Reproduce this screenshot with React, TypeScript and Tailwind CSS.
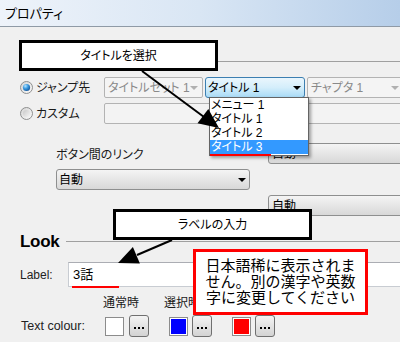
import React from "react";

function Tri({ color = "#000" }: { color?: string }) {
  return (
    <svg width="8" height="4" viewBox="0 0 8 4" className="shrink-0">
      <path d="M0 0H8L4 4Z" fill={color} />
    </svg>
  );
}

function Radio({ checked }: { checked?: boolean }) {
  const k = checked ? "on" : "off";
  return (
    <svg width="13" height="13" viewBox="0 0 13 13" className="shrink-0">
      <defs>
        <linearGradient id={`ring-${k}`} x1="0" y1="0" x2="1" y2="1">
          <stop offset="0" stopColor="#d4d4d4" />
          <stop offset="1" stopColor="#fbfbfb" />
        </linearGradient>
        <radialGradient id={`dot-${k}`} cx="0.35" cy="0.3" r="0.8">
          <stop offset="0" stopColor="#b6e4ff" />
          <stop offset="0.45" stopColor="#3a9ae0" />
          <stop offset="1" stopColor="#0d4a8f" />
        </radialGradient>
        <linearGradient id={`in-${k}`} x1="0" y1="0" x2="1" y2="1">
          <stop offset="0" stopColor="#c8c8c8" />
          <stop offset="1" stopColor="#f6f6f6" />
        </linearGradient>
      </defs>
      <circle cx="6.5" cy="6.5" r="6" fill={`url(#ring-${k})`} stroke="#8e8f8f" strokeWidth="1" />
      {checked ? (
        <circle cx="6.5" cy="6.5" r="3.6" fill={`url(#dot-${k})`} />
      ) : (
        <circle cx="6.5" cy="6.5" r="3.6" fill={`url(#in-${k})`} />
      )}
    </svg>
  );
}

function Swatch({ color }: { color: string }) {
  return (
    <div className="w-[19px] h-[19px] border border-[#8c8c8c] bg-white p-px shrink-0">
      <div className="w-full h-full" style={{ backgroundColor: color }} />
    </div>
  );
}

function DotsButton({ className = "" }: { className?: string }) {
  return (
    <div
      className={`w-[20px] h-[22px] shrink-0 rounded-[3px] border border-[#707070] bg-linear-to-b from-[#f4f4f4] to-[#d3d3d3] flex items-end justify-center gap-[2px] pb-[7px] ${className}`}
    >
      <div className="w-[2px] h-[2px] bg-black" />
      <div className="w-[2px] h-[2px] bg-black" />
      <div className="w-[2px] h-[2px] bg-black" />
    </div>
  );
}

export default function App() {
  return (
    <div className="relative w-[400px] h-[342px] overflow-hidden flex flex-col bg-[#f0f0f0] text-[#1a1a1a] font-['Liberation_Sans','Noto_Sans_CJK_JP',sans-serif]">
      {/* title bar */}
      <div className="h-[26px] shrink-0 flex items-center pl-[5px] bg-linear-to-r from-[#eef3fa] via-[#d9e6f4] to-[#b6cee9]">
        <span className="text-[13px] leading-none text-black [font-feature-settings:'palt']">
          プロパティ
        </span>
      </div>

      <div className="flex flex-1">
        <div className="w-[3px] bg-[#b8cce2]" />
        <div className="w-px bg-[#7c8a99]" />
        <div className="flex-1 flex flex-col border-t border-[#8f9aa6] text-[12px] [font-feature-settings:'palt']">
          {/* separator */}
          <div className="mt-[34px] h-px bg-[#a0a0a0] ml-[100px]" />

          {/* row 1 */}
          <div className="mt-[15px] h-[21px] flex items-center">
            <div className="ml-[20px] w-[84px] flex items-center gap-[3px]">
              <Radio checked />
              <span>ジャンプ先</span>
            </div>
            <div className="w-[99px] h-full flex items-center justify-between pl-[3px] pr-[4px] border border-[#b3b3b3] rounded-[2px] bg-[#f4f4f4] text-[#8a8a8a]">
              <span>タイトルセット 1</span>
              <Tri color="#b0b0b0" />
            </div>
            <div className="ml-[2px] w-[100px] h-full flex items-center justify-between pl-[2px] pr-[3px] border border-[#3c7fb1] rounded-[3px] bg-linear-to-b from-[#eaf6fd] via-[#d4eefb] to-[#a9dbf6] text-black">
              <span>タイトル 1</span>
              <Tri />
            </div>
            <div className="ml-[2px] w-[96px] shrink-0 h-full flex items-center justify-between pl-[3px] pr-[3px] border border-[#b3b3b3] rounded-[2px] bg-[#f4f4f4] text-[#8a8a8a]">
              <span>チャプタ 1</span>
              <Tri color="#b0b0b0" />
            </div>
          </div>

          {/* row 2 */}
          <div className="mt-[5px] h-[21px] flex items-center">
            <div className="ml-[20px] w-[84px] flex items-center gap-[3px]">
              <Radio />
              <span>カスタム</span>
            </div>
            <div className="w-[300px] shrink-0 h-full border border-[#b3b3b3] rounded-[2px] bg-[#f3f3f3]" />
          </div>

          {/* link section */}
          <div className="mt-[19px] flex items-start">
            <div className="ml-[56px] w-[194px] flex flex-col">
              <div className="mt-[5px] h-[14px] leading-[14px]">ボタン間のリンク</div>
              <div className="mt-[7px] h-[21px] flex items-center justify-between pl-[2px] pr-[3px] border border-[#8e8f8f] rounded-[3px] bg-linear-to-b from-[#f4f4f4] to-[#d8d8d8] text-black">
                <span>自動</span>
                <Tri />
              </div>
            </div>
            <div className="ml-[18px] w-[140px] shrink-0 flex flex-col">
              <div className="h-[21px] flex items-center pl-[3px] border border-[#8e8f8f] rounded-[3px] bg-linear-to-b from-[#f4f4f4] to-[#d8d8d8] text-black">
                <span>自動</span>
              </div>
              <div className="mt-[31px] h-[21px] flex items-center pl-[3px] border border-[#8e8f8f] rounded-[3px] bg-linear-to-b from-[#f4f4f4] to-[#d8d8d8] text-black">
                <span>自動</span>
              </div>
            </div>
          </div>

          {/* Look heading */}
          <div className="mt-[17px] h-[16px] flex items-center">
            <span className="ml-[20px] text-[17px] font-bold leading-none tracking-[-0.3px] text-black">
              Look
            </span>
            <div className="flex-1 h-px bg-[#a0a0a0] ml-[7px]" />
          </div>

          {/* Label row */}
          <div className="mt-[13px] h-[25px] flex items-center">
            <span className="ml-[20px] w-[48px] text-[12px] text-[#222]">Label:</span>
            <div className="flex-1 h-full bg-white border border-[#c8ccd2] border-t-[#abadb3] flex items-center pl-[4px] text-[13px] text-black">
              3話
            </div>
          </div>

          {/* column headers */}
          <div className="mt-[9px] h-[14px] flex items-center leading-[14px]">
            <span className="ml-[103px] w-[61px]">通常時</span>
            <span>選択時</span>
          </div>

          {/* Text colour row */}
          <div className="mt-[5px] h-[22px] flex items-center">
            <span className="ml-[21px] w-[84px] text-[12.5px] text-[#222]">Text colour:</span>
            <Swatch color="#ffffff" />
            <DotsButton className="ml-[5px]" />
            <div className="ml-[20px]">
              <Swatch color="#0000ff" />
            </div>
            <DotsButton className="ml-[4px]" />
            <div className="ml-[20px]">
              <Swatch color="#ff0000" />
            </div>
            <DotsButton className="ml-[4px]" />
          </div>
        </div>
      </div>

      {/* dropdown list */}
      <div className="absolute left-[209px] top-[97px] w-[100px] h-[59px] bg-white border border-[#646464] shadow-[2px_2px_3px_rgba(0,0,0,0.35)] flex flex-col text-[12px] text-black [font-feature-settings:'palt']">
        <div className="h-[14px] leading-[14px] pl-[1px]">メニュー 1</div>
        <div className="h-[14px] leading-[14px] pl-[1px]">タイトル 1</div>
        <div className="h-[14px] leading-[14px] pl-[1px]">タイトル 2</div>
        <div className="h-[14px] leading-[14px] pl-[1px] bg-[#3399ff] text-white">タイトル 3</div>
      </div>
      <div className="absolute left-[210px] top-[154px] w-[61px] h-[2px] bg-[#ff0000]" />

      {/* red underline under label */}
      <div className="absolute left-[72px] top-[286px] w-[47px] h-[2px] bg-[#ff0000]" />

      {/* arrows */}
      <svg
        className="absolute left-0 top-0 pointer-events-none"
        width="400"
        height="342"
        viewBox="0 0 400 342"
      >
        <line x1="142" y1="71" x2="204" y2="117" stroke="#000" strokeWidth="2" />
        <path d="M219 128 L197.5 123.3 L208.3 108.9 Z" fill="#000" />
        <line x1="172" y1="240" x2="137" y2="255" stroke="#000" strokeWidth="2" />
        <path d="M118 263 L139.9 263.5 L132.9 246.9 Z" fill="#000" />
      </svg>

      {/* callout 1 */}
      <div className="absolute left-[19px] top-[40px] w-[199px] h-[31px] border-[3px] border-black bg-white flex items-center justify-center text-[12px] text-black [font-feature-settings:'palt']">
        タイトルを選択
      </div>

      {/* callout 2 */}
      <div className="absolute left-[113px] top-[209px] w-[199px] h-[31px] border-[3px] border-black bg-white flex items-center justify-center text-[12px] text-black [font-feature-settings:'palt']">
        ラベルの入力
      </div>

      {/* red note */}
      <div className="absolute left-[193px] top-[249px] w-[175px] h-[66px] border-[3px] border-[#ff0000] bg-white flex flex-col items-center justify-center text-center text-[15px] leading-[16px] text-black">
        <div>日本語稀に表示されま</div>
        <div>せん。別の漢字や英数</div>
        <div>字に変更してください</div>
      </div>
    </div>
  );
}
